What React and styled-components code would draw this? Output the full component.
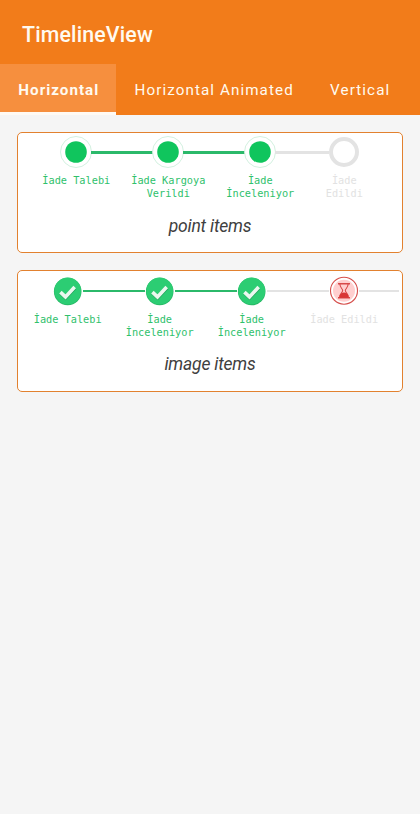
import React from "react";
import styled, { createGlobalStyle } from "styled-components";

const GlobalStyle = createGlobalStyle`
  * { box-sizing: border-box; }
  body { margin: 0; background: #f5f5f5; font-family: Roboto, sans-serif; }
`;

const Screen = styled.div`
  min-height: 814px;
  background: #f5f5f5;
`;

const Header = styled.header`
  height: 115px;
  background: #f27c1a;
  color: #fffaf0;
`;

const Title = styled.h1`
  height: 64px;
  margin: 0;
  padding: 6px 0 0 22px;
  font-size: 21.3px;
  font-weight: 500;
  line-height: 58px;
  letter-spacing: 0.17px;
`;

const Tabs = styled.nav`
  display: flex;
  height: 51px;
`;

const Tab = styled.div`
  flex: none;
  width: ${(p) => p.$width}px;
  padding-left: ${(p) => (p.$active ? 1.6 : 0.4)}px;
  border-bottom: 3px solid ${(p) => (p.$active ? "#fffaf4" : "transparent")};
  background: ${(p) => (p.$active ? "#f68f3e" : "transparent")};
  font-size: 15.2px;
  font-weight: ${(p) => (p.$active ? 700 : 400)};
  letter-spacing: ${(p) => p.$spacing}px;
  line-height: 52px;
  text-align: center;
  white-space: nowrap;
`;

const Content = styled.main`
  display: flex;
  flex-direction: column;
  gap: 17px;
  padding: 17px 17px 0;
`;

const Card = styled.section`
  height: ${(p) => p.$height}px;
  border: 1px solid #e2812f;
  border-radius: 5px;
  background: #fff;
`;

const Timeline = styled.div`
  display: flex;
  height: 81px;
  padding-left: ${(p) => p.$inset}px;
  padding-top: ${(p) => p.$top}px;
`;

const Step = styled.div`
  flex: none;
  width: ${(p) => p.$width}px;
`;

const Rail = styled.div`
  display: flex;
  align-items: center;
  height: 30px;
  margin-right: ${(p) => -p.$extend}px;
`;

const Line = styled.div`
  flex: ${(p) => p.$grow} 1 0;
  height: ${(p) => p.$thickness}px;
  background: ${(p) => p.$color};
`;

const Marker = styled.svg`
  flex: none;
  width: 30px;
  height: 30px;
  overflow: visible;
`;

const Label = styled.div`
  margin-top: ${(p) => p.$gap}px;
  color: ${(p) => (p.$pending ? "#e2e2e2" : "#2fc16c")};
  font-family: "DejaVu Sans Mono", monospace;
  font-size: 10.25px;
  line-height: 13px;
  text-align: center;
  white-space: pre;
`;

const Caption = styled.div`
  color: #404040;
  font-size: 17.5px;
  font-style: italic;
  letter-spacing: -0.2px;
  line-height: 24px;
  text-align: center;
`;

function Point({ pending }) {
  return (
    <Marker viewBox="0 0 30 30">
      {pending ? (
        <circle cx="15" cy="15" r="13" fill="#fff" stroke="#e3e3e3" strokeWidth="4" />
      ) : (
        <>
          <circle cx="15" cy="15" r="15.5" fill="#fff" stroke="#cdeedb" strokeWidth="0.9" />
          <circle cx="15" cy="15" r="10.8" fill="#10c55d" />
        </>
      )}
    </Marker>
  );
}

function Check() {
  return (
    <Marker viewBox="0 0 30 30">
      <circle cx="14.7" cy="15.5" r="13.8" fill="#27b765" />
      <circle cx="14.7" cy="14.9" r="13.4" fill="#2ccd73" />
      <path d="M7.6 16.9 L12.6 21.7 L22 11.7" fill="none" stroke="#1f9f59" strokeWidth="3.6" />
      <path d="M7.4 16.1 L12.5 20.9 L21.7 11" fill="none" stroke="#eaf8ef" strokeWidth="3.6" />
    </Marker>
  );
}

function Hourglass() {
  return (
    <Marker viewBox="0 0 30 30">
      <circle cx="15" cy="14.7" r="13.5" fill="#fff" stroke="#d64f4c" strokeWidth="1.1" />
      <circle cx="15" cy="14.7" r="11" fill="#ffcfcf" />
      <path d="M9 7.7 H21 M9 21.7 H21" stroke="#d84848" strokeWidth="1.4" />
      <path
        d="M10.9 8 C10.9 12 13.7 12.6 13.7 14.6 C13.7 16.6 10.9 17 10.9 21 M19.1 21 C19.1 17 16.3 16.6 16.3 14.6 C16.3 12.6 19.1 12 19.1 8"
        fill="none"
        stroke="#d84848"
        strokeWidth="1.1"
      />
      <path d="M10.4 21.8 V20 C11 17.8 12.8 16.6 15 16.6 C17.2 16.6 19 17.8 19.6 20 V21.8 Z" fill="#d93636" />
    </Marker>
  );
}

const GREEN = "#2bb96a";
const GREY = "#e3e3e3";

const pointSteps = [
  { label: "İade Talebi", width: 92, left: "transparent", right: GREEN },
  { label: "İade Kargoya\nVerildi", width: 92, left: GREEN, right: GREEN },
  { label: "İade\nİnceleniyor", width: 92, left: GREEN, right: GREY },
  { label: "İade\nEdildi", width: 76, left: GREY, right: "transparent", pending: true },
];

const imageSteps = [
  { label: "İade Talebi", width: 92, left: "transparent", right: GREEN },
  { label: "İade\nİnceleniyor", width: 92, left: GREEN, right: GREEN },
  { label: "İade\nİnceleniyor", width: 92, left: GREEN, right: GREY },
  { label: "İade Edildi", width: 93, left: GREY, right: GREY, pending: true, extend: 8 },
];

function TimelineCard({ steps, images, caption, height }) {
  return (
    <Card $height={height}>
      <Timeline $inset={images ? 3.7 : 12.3} $top={images ? 5 : 4.4}>
        {steps.map((s, i) => (
          <Step key={i} $width={s.width}>
            <Rail $extend={s.extend || 0}>
              <Line $color={s.left} $grow={31} $thickness={images ? 2 : 3} />
              {images ? s.pending ? <Hourglass /> : <Check /> : <Point pending={s.pending} />}
              <Line
                $color={s.right}
                $grow={s.extend ? 31 + s.extend : 31}
                $thickness={images ? 2 : 3}
              />
            </Rail>
            <Label $gap={images ? 7 : 6.4} $pending={s.pending}>{s.label}</Label>
          </Step>
        ))}
      </Timeline>
      <Caption>{caption}</Caption>
    </Card>
  );
}

export default function App() {
  return (
    <Screen>
      <GlobalStyle />
      <Header>
        <Title>TimelineView</Title>
        <Tabs>
          <Tab $width={116} $spacing={1} $active>Horizontal</Tab>
          <Tab $width={196} $spacing={1.08}>Horizontal Animated</Tab>
          <Tab $width={96} $spacing={1.1}>Vertical</Tab>
        </Tabs>
      </Header>
      <Content>
        <TimelineCard steps={pointSteps} caption="point items" height={121} />
        <TimelineCard steps={imageSteps} images caption="image items" height={122} />
      </Content>
    </Screen>
  );
}
